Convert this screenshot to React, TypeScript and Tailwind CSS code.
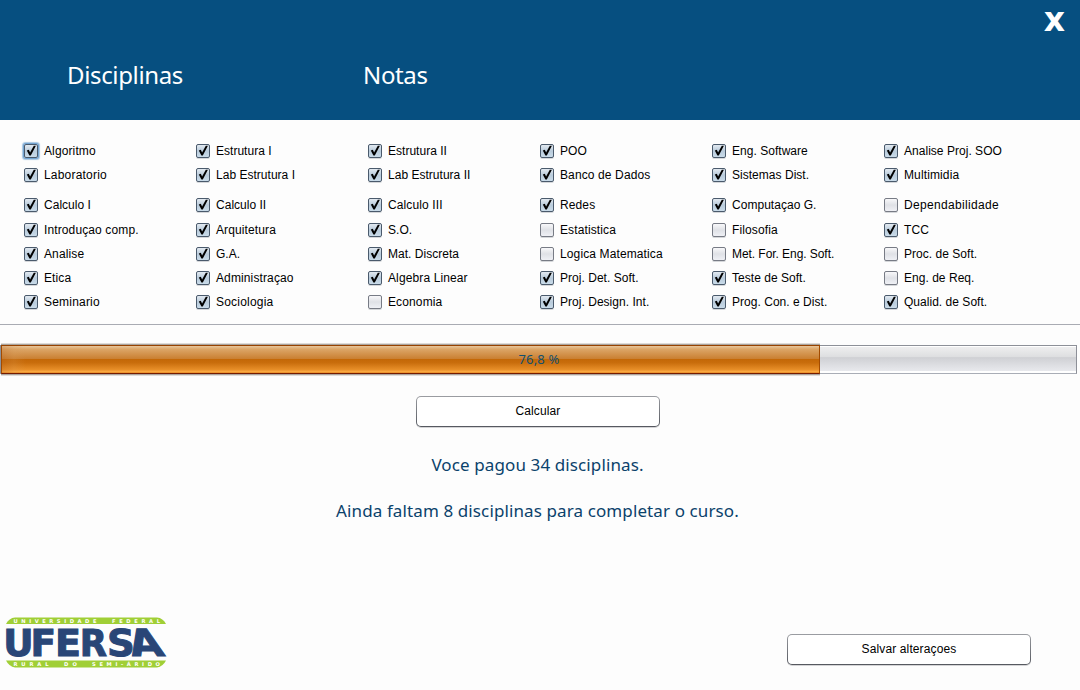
const rows: { names: string[]; off: number[]; pad: string }[] = [
  { names: ["Algoritmo", "Estrutura I", "Estrutura II", "POO", "Eng. Software", "Analise Proj. SOO"], off: [], pad: "h-6" },
  { names: ["Laboratorio", "Lab Estrutura I", "Lab Estrutura II", "Banco de Dados", "Sistemas Dist.", "Multimidia"], off: [], pad: "h-6 mb-1.5" },
  { names: ["Calculo I", "Calculo II", "Calculo III", "Redes", "Computaçao G.", "Dependabilidade"], off: [5], pad: "h-6 mb-px" },
  { names: ["Introduçao comp.", "Arquitetura", "S.O.", "Estatistica", "Filosofia", "TCC"], off: [3, 4], pad: "h-6" },
  { names: ["Analise", "G.A.", "Mat. Discreta", "Logica Matematica", "Met. For. Eng. Soft.", "Proc. de Soft."], off: [3, 4, 5], pad: "h-6" },
  { names: ["Etica", "Administraçao", "Algebra Linear", "Proj. Det. Soft.", "Teste de Soft.", "Eng. de Req."], off: [5], pad: "h-6" },
  { names: ["Seminario", "Sociologia", "Economia", "Proj. Design. Int.", "Prog. Con. e Dist.", "Qualid. de Soft."], off: [2], pad: "h-6" },
];

function tracking(name: string) {
  if (name === "Dependabilidade") return "tracking-[0.33px]";
  if (name === "Laboratorio" || name === "Seminario" || name === "Sociologia") return "tracking-[0.2px]";
  if (name.startsWith("Met.")) return "tracking-[-0.06px]";
  if (name.includes(".") && name !== "Introduçao comp.") return "tracking-[0.03px]";
  if (name.endsWith(" I") || name.endsWith(" II")) return "tracking-[0.02px]";
  return "tracking-[0.12px]";
}

function Box({ on, focus }: { on: boolean; focus: boolean }) {
  return (
    <span
      className={`block h-[14px] w-[14px] shrink-0 rounded-[2px] border ${
        on
          ? "border-[#4a5a6c] bg-linear-to-b from-[#e3eaf1] via-[#b9cbdb] to-[#c9dbe9]"
          : "border-[#777b85] bg-linear-to-b from-[#f8f8fa] via-[#dfe1e6] to-[#eff0f5]"
      } ${focus ? "shadow-[0_0_0_1px_#73a4d1,0_0_1px_1.5px_#a9c7e2]" : "shadow-[0_1px_0_#d5d7da]"}`}
    >
      {on && (
        <svg viewBox="0 0 12 12" className="block h-[12px] w-[12px]">
          <path d="M1.8 5.4 3.8 4.8 5.1 7.5 8.8 .8 10.9 .8 5.8 10.5 4.4 10.5Z" fill="#000" />
        </svg>
      )}
    </span>
  );
}

function PushButton({ label }: { label: string }) {
  return (
    <button className="block h-[31px] w-[244px] rounded-[5px] bg-linear-to-b from-[#9b9da2] to-[#55585f] p-px shadow-[0_1px_0_#d4d4d6]">
      <span className="flex h-full items-center justify-center rounded-[4px] bg-white pb-px text-[12px] leading-4 tracking-[0.12px]">{label}</span>
    </button>
  );
}

function Logo() {
  return (
    <svg viewBox="0 0 162 52" className="block h-[52px] w-[162px] overflow-visible">
      <path d="M0 7Q3 1 9 .5H151Q157 1 160 7Z" fill="#a0cf36" />
      <path d="M0 43.5H160Q157 49.5 151 50.5H9Q3 49.5 0 43.5Z" fill="#a0cf36" />
      <g fill="#fff" fontFamily="DejaVu Sans" fontWeight="bold" fontSize="5.2">
        <text x="7.5" y="5.8" textLength="83">UNIVERSIDADE</text>
        <text x="106" y="5.8" textLength="48">FEDERAL</text>
        <text x="7.5" y="49" textLength="35">RURAL</text>
        <text x="58" y="49" textLength="13">DO</text>
        <text x="86" y="49" textLength="68">SEMI-ÁRIDO</text>
      </g>
      <g fill="#294677" stroke="#294677" strokeWidth="1" fontFamily="DejaVu Sans" fontWeight="bold" fontSize="37.5">
        <text x="-2.7" y="38.8" textLength="30.4" lengthAdjust="spacingAndGlyphs">U</text>
        <text x="24.6" y="38.8" textLength="25.6" lengthAdjust="spacingAndGlyphs">F</text>
        <text x="49" y="38.8" textLength="26" lengthAdjust="spacingAndGlyphs">E</text>
        <text x="73.7" y="38.8" textLength="27.3" lengthAdjust="spacingAndGlyphs">R</text>
        <text x="100.9" y="38.8" textLength="27.8" lengthAdjust="spacingAndGlyphs">S</text>
        <text transform="translate(126.3 38.8) skewX(15)" textLength="33.4" lengthAdjust="spacingAndGlyphs">A</text>
      </g>
    </svg>
  );
}

export default function App() {
  return (
    <main className="flex h-[690px] w-[1080px] flex-col overflow-hidden bg-[#fdfdfd] font-['Liberation_Sans',sans-serif] text-black">
      <header className="flex h-[120px] shrink-0 items-start bg-[#064f80] font-['Noto_Sans',sans-serif] text-[24px] tracking-[-0.35px] text-white">
        <h1 className="w-[296px] pt-[58px] pl-[67px] leading-[34px]">Disciplinas</h1>
        <h2 className="grow pt-[58px] pl-[67px] leading-[34px]">Notas</h2>
        <button className="mr-[15px] font-['DejaVu_Sans',sans-serif] text-[33px] leading-[39px] font-bold tracking-normal">x</button>
      </header>

      <section className="h-[205px] shrink-0 border-b border-[#a9abb3] pt-[19px] pl-[24px]">
        {rows.map((row, r) => (
          <div key={r} className={`grid grid-cols-[repeat(6,172px)] ${row.pad}`}>
            {row.names.map((name, c) => (
              <label key={name} className={`flex h-6 items-center gap-[6px] text-[12px] leading-4 whitespace-nowrap ${tracking(name)}`}>
                <Box on={!row.off.includes(c)} focus={r === 0 && c === 0} />
                {name}
              </label>
            ))}
          </div>
        ))}
      </section>

      <section className="mt-[20px] grid h-[29px] w-[1077px] shrink-0 grid-cols-1">
        <div className="col-start-1 row-start-1 border border-[#8d9098] border-b-[#a9adb6] bg-white pt-px pb-[2px]">
          <div className="h-full bg-[linear-gradient(#eeeeef,#dddee0_42%,#cfd0d4_44%,#e8e9ed)]" />
        </div>
        <div className="z-10 col-start-1 row-start-1 ml-px w-[819px] border border-t-[#964200] border-r-[#a34b00] border-b-[#751b00] border-l-[#a34b00] bg-[linear-gradient(90deg,#b8662444,#d89a5833_12px,transparent_24px),linear-gradient(#e8c69b_0,#dca566_12%,#ca8032_47%,#c46807_50%,#c96d0c_62%,#e88f29_88%,#ffad46_96%,#db8018)] shadow-[0_-1px_0_#aaa49c,0_1px_0_#aaa39e,0_-2px_0_#dedbd8,0_2px_0_#dedbd8]" />
        <div className="z-20 col-start-1 row-start-1 pl-px text-center font-['Noto_Sans',sans-serif] text-[13px] leading-[28px] tracking-[0.2px] text-[#12506f]">76,8 %</div>
      </section>

      <div className="mt-[22px] ml-[416px] shrink-0">
        <PushButton label="Calcular" />
      </div>

      <section className="mt-[26px] w-[1075px] shrink-0 text-center font-['Noto_Sans',sans-serif] text-[17px] leading-6 tracking-[0.11px] text-[#0b426b]">
        <p>Voce pagou 34 disciplinas.</p>
        <p className="mt-[22px]">Ainda faltam 8 disciplinas para completar o curso.</p>
      </section>

      <footer className="mt-[94px] flex shrink-0 items-start justify-between pr-[49px] pl-[6px]">
        <Logo />
        <div className="mt-[17px]">
          <PushButton label="Salvar alteraçoes" />
        </div>
      </footer>
    </main>
  );
}
